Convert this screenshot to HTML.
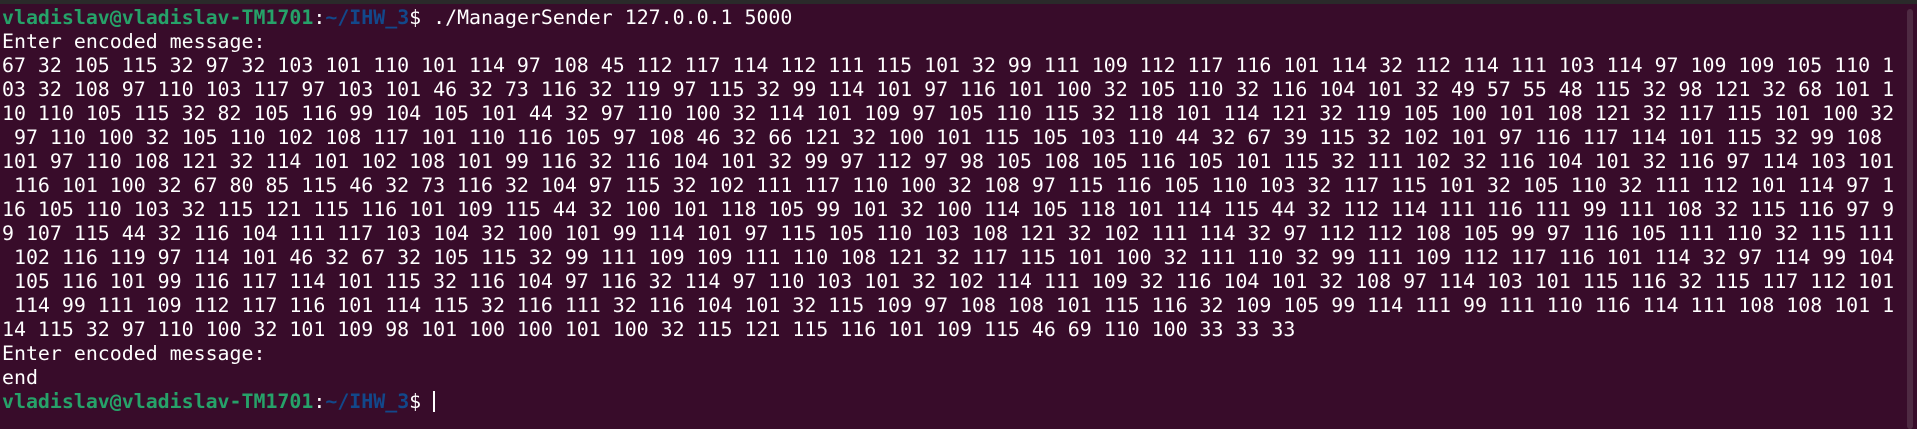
<!DOCTYPE html>
<html><head><meta charset="utf-8"><style>
html,body{margin:0;padding:0;}
body{width:1917px;height:429px;overflow:hidden;background:#380c2a;position:relative;}
.top{position:absolute;left:0;top:0;width:1917px;height:4px;background:#2a2a2a;}
.sb{position:absolute;right:4px;top:9px;width:6px;height:420px;background:#4e2a42;border-radius:3px;}
pre{margin:0;position:absolute;left:2px;top:6px;font-family:"DejaVu Sans Mono","Liberation Mono",monospace;font-size:19.9px;line-height:24px;color:#ffffff;white-space:pre;}
.g{color:#26a269;font-weight:bold;}
.b{color:#12488b;font-weight:bold;}
.cur{display:inline-block;width:2px;height:21px;background:#fff;vertical-align:-4px;margin-left:0px;}
</style></head><body>
<div class="top"></div><div class="sb"></div>
<pre><span class="g">vladislav@vladislav-TM1701</span>:<span class="b">~/IHW_3</span>$ ./ManagerSender 127.0.0.1 5000
Enter encoded message:
67 32 105 115 32 97 32 103 101 110 101 114 97 108 45 112 117 114 112 111 115 101 32 99 111 109 112 117 116 101 114 32 112 114 111 103 114 97 109 109 105 110 1
03 32 108 97 110 103 117 97 103 101 46 32 73 116 32 119 97 115 32 99 114 101 97 116 101 100 32 105 110 32 116 104 101 32 49 57 55 48 115 32 98 121 32 68 101 1
10 110 105 115 32 82 105 116 99 104 105 101 44 32 97 110 100 32 114 101 109 97 105 110 115 32 118 101 114 121 32 119 105 100 101 108 121 32 117 115 101 100 32
 97 110 100 32 105 110 102 108 117 101 110 116 105 97 108 46 32 66 121 32 100 101 115 105 103 110 44 32 67 39 115 32 102 101 97 116 117 114 101 115 32 99 108
101 97 110 108 121 32 114 101 102 108 101 99 116 32 116 104 101 32 99 97 112 97 98 105 108 105 116 105 101 115 32 111 102 32 116 104 101 32 116 97 114 103 101
 116 101 100 32 67 80 85 115 46 32 73 116 32 104 97 115 32 102 111 117 110 100 32 108 97 115 116 105 110 103 32 117 115 101 32 105 110 32 111 112 101 114 97 1
16 105 110 103 32 115 121 115 116 101 109 115 44 32 100 101 118 105 99 101 32 100 114 105 118 101 114 115 44 32 112 114 111 116 111 99 111 108 32 115 116 97 9
9 107 115 44 32 116 104 111 117 103 104 32 100 101 99 114 101 97 115 105 110 103 108 121 32 102 111 114 32 97 112 112 108 105 99 97 116 105 111 110 32 115 111
 102 116 119 97 114 101 46 32 67 32 105 115 32 99 111 109 109 111 110 108 121 32 117 115 101 100 32 111 110 32 99 111 109 112 117 116 101 114 32 97 114 99 104
 105 116 101 99 116 117 114 101 115 32 116 104 97 116 32 114 97 110 103 101 32 102 114 111 109 32 116 104 101 32 108 97 114 103 101 115 116 32 115 117 112 101
 114 99 111 109 112 117 116 101 114 115 32 116 111 32 116 104 101 32 115 109 97 108 108 101 115 116 32 109 105 99 114 111 99 111 110 116 114 111 108 108 101 1
14 115 32 97 110 100 32 101 109 98 101 100 100 101 100 32 115 121 115 116 101 109 115 46 69 110 100 33 33 33
Enter encoded message:
end
<span class="g">vladislav@vladislav-TM1701</span>:<span class="b">~/IHW_3</span>$ <span class="cur"></span></pre>
</body></html>
